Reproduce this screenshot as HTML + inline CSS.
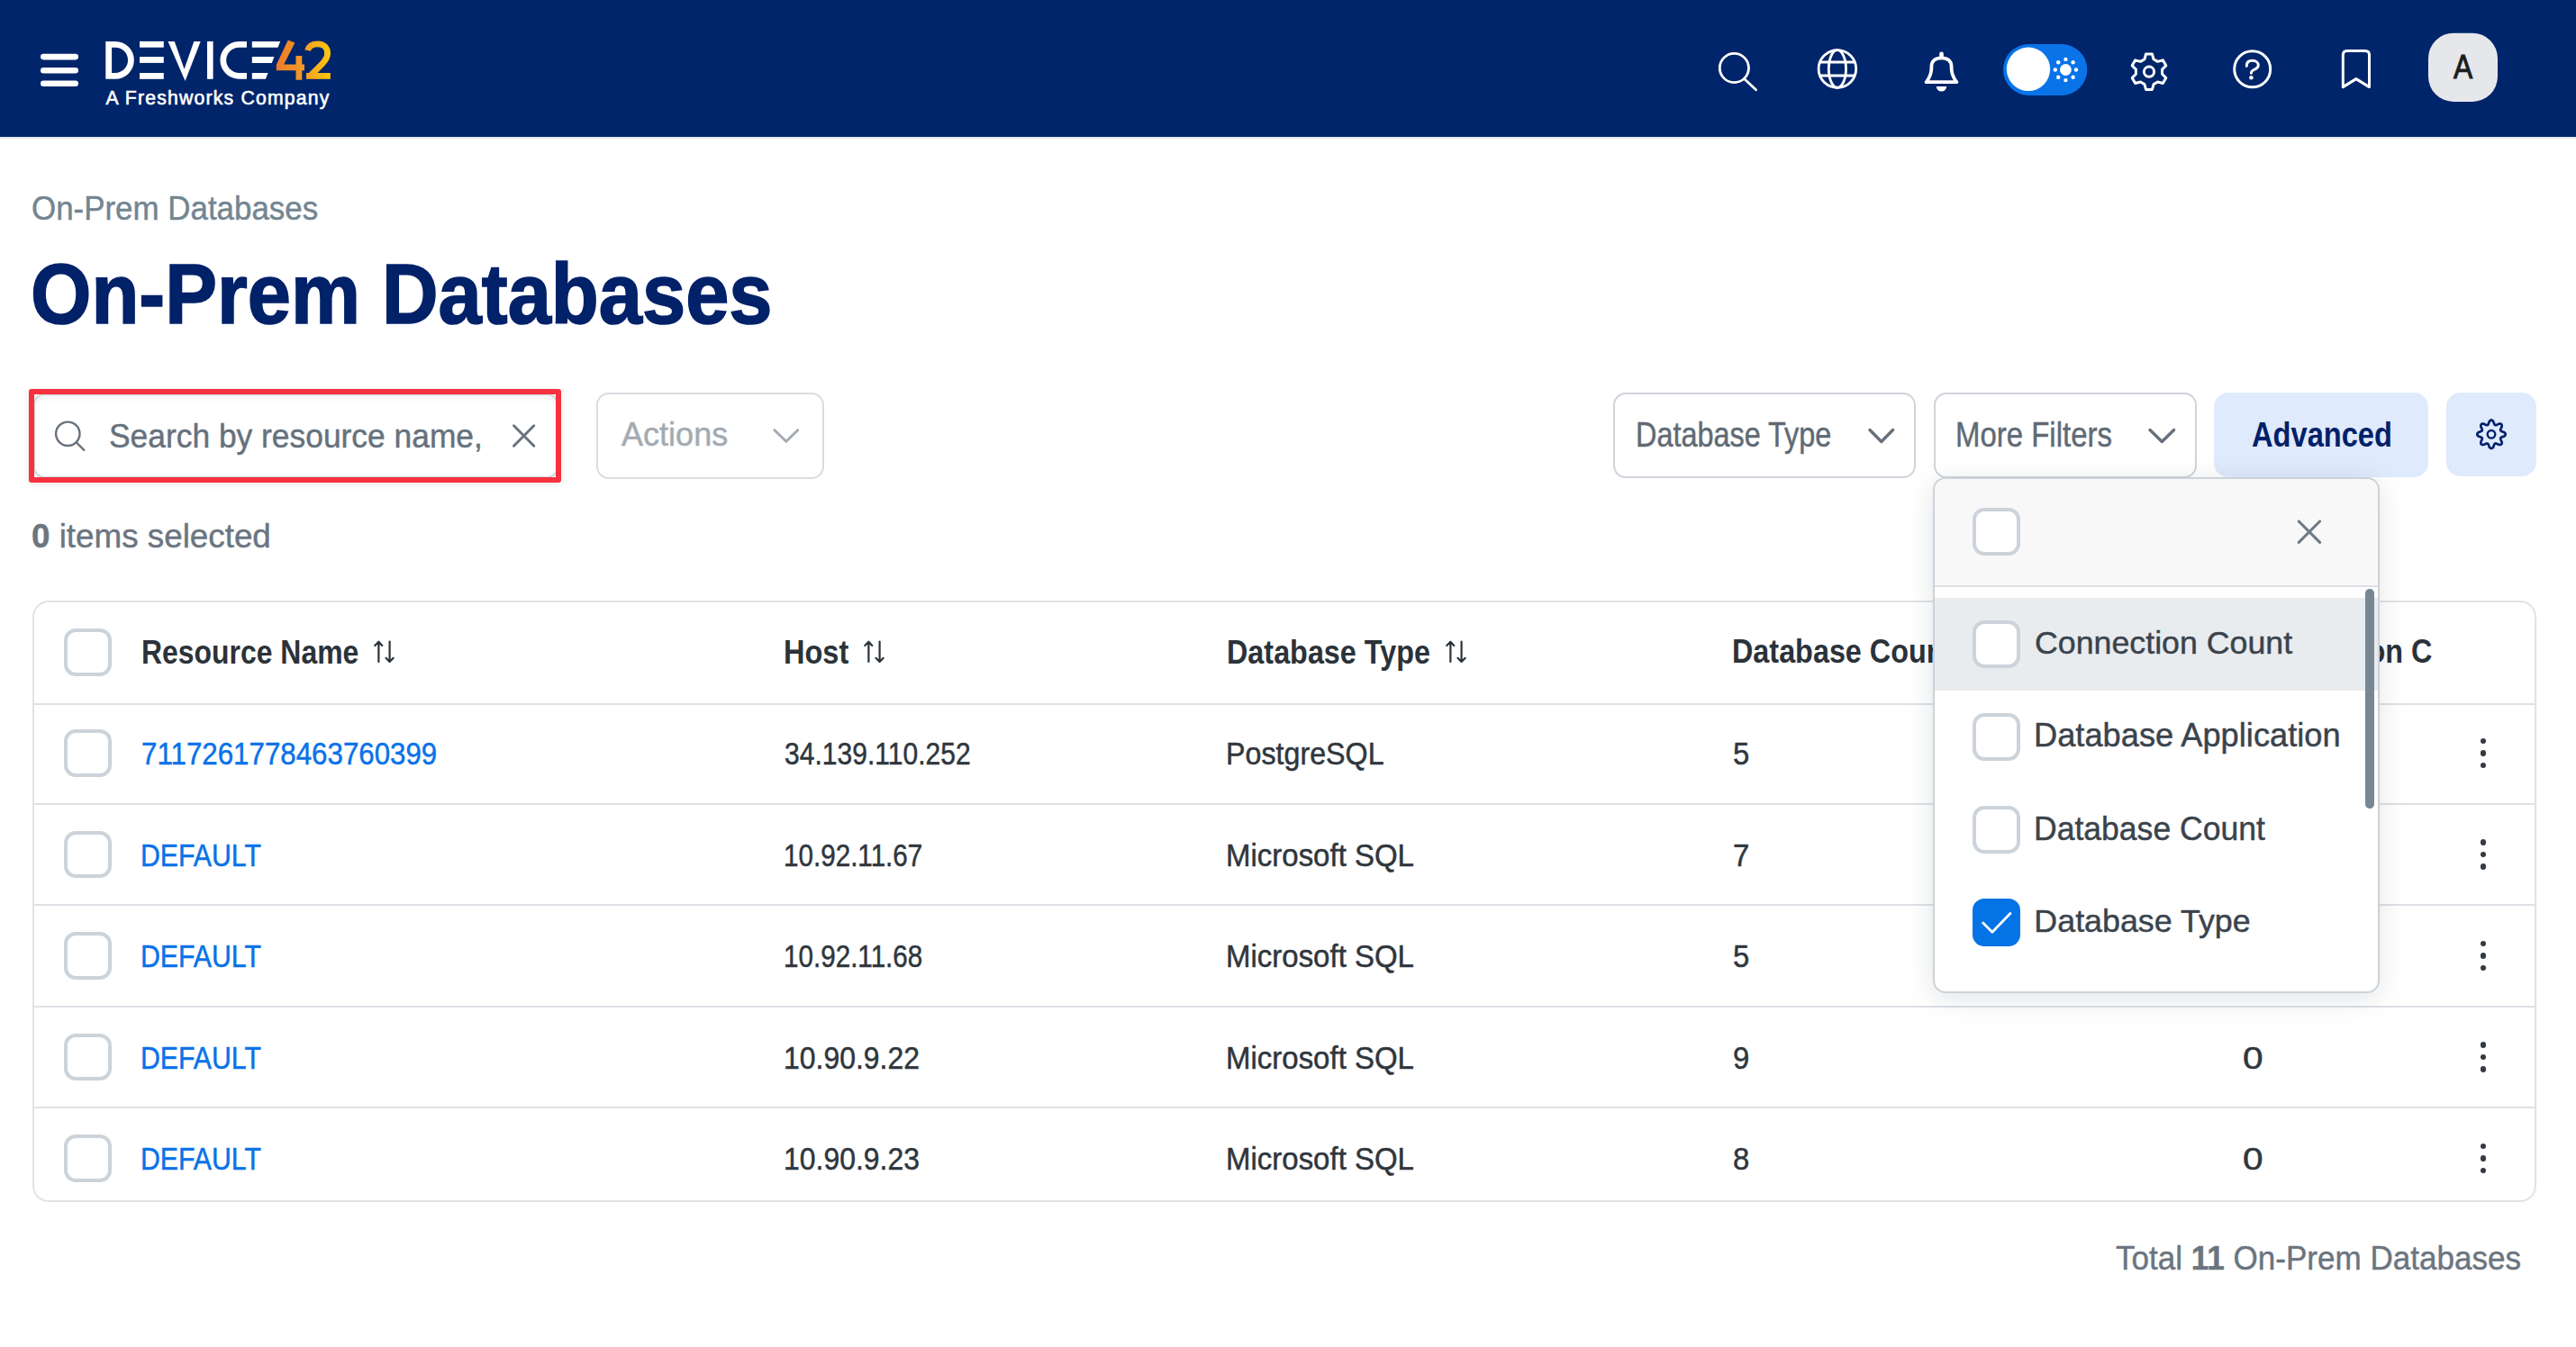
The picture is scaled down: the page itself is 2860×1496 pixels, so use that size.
<!DOCTYPE html>
<html><head><meta charset="utf-8">
<style>
html,body{margin:0;padding:0;}
body{width:2860px;height:1496px;overflow:hidden;background:#fff;position:relative;font-family:"Liberation Sans",sans-serif;}
.ab{position:absolute;}
.t{position:absolute;white-space:pre;font-family:"Liberation Sans",sans-serif;}
.t b{font-weight:700;}
.cb{position:absolute;width:52.5px;height:52.5px;box-sizing:border-box;border:4px solid #cdd3da;border-radius:13px;background:#fff;z-index:12;}
.cb.on{background:#0473e6;border-color:#0473e6;}
.cb.on svg{position:absolute;left:-4px;top:-4px;}
.hl{position:absolute;left:38px;width:2776px;height:2px;background:#dde1e6;}
.dot{position:absolute;width:6.6px;height:6.6px;border-radius:50%;background:#333a42;}
@media (max-width:2000px){html{zoom:0.5;}}
.btn{position:absolute;box-sizing:border-box;border:2px solid #d3d8dd;border-radius:14px;background:#fff;}
</style></head>
<body>
<!-- header -->
<div class="ab" style="left:0;top:0;width:2860px;height:152px;background:#00256a;"></div>
<div class="ab" style="left:0;top:152px;width:2860px;height:2px;background:#e3e6ea;"></div>
<svg class="ab" style="left:0;top:0;z-index:2" width="2860" height="152" viewBox="0 0 2860 152">
 <defs>
  <linearGradient id="g42" gradientUnits="userSpaceOnUse" x1="306" y1="0" x2="367" y2="0">
   <stop offset="0" stop-color="#ee7a2c"/><stop offset="0.5" stop-color="#f39a24"/><stop offset="1" stop-color="#fdc90f"/>
  </linearGradient>
 </defs>
 <!-- hamburger -->
 <rect x="45" y="59.8" width="42" height="6.6" rx="3.3" fill="#fff"/>
 <rect x="45" y="75" width="42" height="6.6" rx="3.3" fill="#fff"/>
 <rect x="45" y="89.4" width="42" height="6.6" rx="3.3" fill="#fff"/>
 <!-- logo -->
 <path d="M120.7,49.3 H128 A17.4,17.55 0 0 1 128,84.4 H120.7 Z" fill="none" stroke="#fff" stroke-width="6.8"/>
 <rect x="155" y="45.9" width="26.8" height="6.8" fill="#fff"/>
 <rect x="155" y="63.1" width="26.8" height="6.8" fill="#fff"/>
 <rect x="155" y="81" width="26.8" height="6.8" fill="#fff"/>
 <path d="M186.5,45.9 L193.8,45.9 L204.6,76.8 L215.3,45.9 L222.7,45.9 L205.6,89.9 Z" fill="#fff"/>
 <rect x="230" y="45.9" width="6.6" height="41.9" fill="#fff"/>
 <path d="M274,49.3 H265.8 A18,17.55 0 0 0 265.8,84.4 H274" fill="none" stroke="#fff" stroke-width="6.8"/>
 <path d="M279.8,45.9 L311.2,45.9 L308.5,52.7 L279.8,52.7 Z" fill="#fff"/>
 <path d="M279.8,63.1 L304.5,63.1 L301.8,69.9 L279.8,69.9 Z" fill="#fff"/>
 <path d="M279.8,81 L297.6,81 L294.9,87.8 L279.8,87.8 Z" fill="#fff"/>
 <path d="M319.8,44.5 L327.4,47.5 L315.2,71.5 L328.5,71.5 L328.5,62 L335.3,62 L335.3,71.5 L338,71.5 L338,78.3 L335.3,78.3 L335.3,88.8 L328.5,88.8 L328.5,78.3 L306.8,78.3 L306.8,72 Z" fill="url(#g42)"/>
 <path d="M341.6,56 C342.8,50.5 347.5,48.8 353,48.8 C359.5,48.8 363.6,53 363.6,59.2 C363.6,64.5 360.8,67.8 356.8,71.8 L345.5,83.2" fill="none" stroke="url(#g42)" stroke-width="6.8"/>
 <rect x="340" y="81" width="26.8" height="6.8" fill="url(#g42)"/>
 <!-- search -->
 <circle cx="1925.4" cy="75.5" r="16.1" fill="none" stroke="#fff" stroke-width="2.8"/>
 <path d="M1937.3,88.2 L1949.6,99.8" stroke="#fff" stroke-width="2.8" stroke-linecap="round"/>
 <!-- globe -->
 <circle cx="2039.9" cy="76.5" r="20.8" fill="none" stroke="#fff" stroke-width="2.8"/>
 <ellipse cx="2039.9" cy="76.5" rx="9.6" ry="20.8" fill="none" stroke="#fff" stroke-width="2.8"/>
 <path d="M2020.5,69 H2059.3 M2020.5,84 H2059.3" stroke="#fff" stroke-width="2.8"/>
 <!-- bell -->
 <path d="M2138.6,91.2 L2172.4,91.2 C2169.8,87.8 2166.8,84 2166.6,76 L2166.6,74 C2166.6,67.5 2162,64.3 2155.5,64.3 C2149,64.3 2144.4,67.5 2144.4,74 L2144.4,76 C2144.2,84 2141.2,87.8 2138.6,91.2 Z" fill="none" stroke="#fff" stroke-width="3.8" stroke-linejoin="round"/>
 <path d="M2155.5,59.8 V63" stroke="#fff" stroke-width="4.6" stroke-linecap="round"/>
 <path d="M2149.8,96 A5.7,5.6 0 0 0 2161.2,96 Z" fill="#fff"/>
 <!-- toggle -->
 <rect x="2224" y="49" width="93.3" height="56.9" rx="28.45" fill="#0a73e8"/>
 <circle cx="2252" cy="76.8" r="24.2" fill="#fff"/>
 <circle cx="2293.4" cy="77.5" r="6.4" fill="#fff"/>
 <g fill="#fff">
  <circle cx="2293.4" cy="65.9" r="2.2"/><circle cx="2293.4" cy="89.1" r="2.2"/>
  <circle cx="2281.8" cy="77.5" r="2.2"/><circle cx="2305" cy="77.5" r="2.2"/>
  <circle cx="2285.2" cy="69.3" r="2.2"/><circle cx="2301.6" cy="69.3" r="2.2"/>
  <circle cx="2285.2" cy="85.7" r="2.2"/><circle cx="2301.6" cy="85.7" r="2.2"/>
 </g>
 <!-- gear -->
 <path d="M2380.94,65.79 L2382.53,60.00 L2389.47,60.00 L2391.06,65.79 L2395.51,68.36 L2401.32,66.84 L2404.79,72.86 L2400.58,77.13 L2400.58,82.27 L2404.79,86.54 L2401.32,92.56 L2395.51,91.04 L2391.06,93.61 L2389.47,99.40 L2382.53,99.40 L2380.94,93.61 L2376.49,91.04 L2370.68,92.56 L2367.21,86.54 L2371.42,82.27 L2371.42,77.13 L2367.21,72.86 L2370.68,66.84 L2376.49,68.36 Z" fill="none" stroke="#fff" stroke-width="3" stroke-linejoin="round"/>
 <circle cx="2386" cy="79.7" r="5.6" fill="none" stroke="#fff" stroke-width="3"/>
 <!-- help -->
 <circle cx="2500.7" cy="76.8" r="20" fill="none" stroke="#fff" stroke-width="3"/>
 <path d="M2494.3,73.2 C2494.3,69.3 2497,67.3 2500.8,67.3 C2504.6,67.3 2507.3,69.6 2507.3,72.4 C2507.3,75.2 2504.9,76.3 2502.4,77.5 C2500.3,78.5 2499.4,79.5 2499.4,81.2" fill="none" stroke="#fff" stroke-width="3" stroke-linecap="round"/>
 <circle cx="2499.4" cy="86.2" r="2.3" fill="#fff"/>
 <!-- bookmark -->
 <path d="M2601.3,96.6 V61 Q2601.3,56.5 2605.8,56.5 H2626 Q2630.5,56.5 2630.5,61 V96.6 L2615.9,87.6 Z" fill="none" stroke="#fff" stroke-width="3" stroke-linejoin="round"/>
 <!-- avatar -->
 <rect x="2696" y="36.7" width="77" height="76.3" rx="28" fill="#e5e7eb"/>
</svg>
<div class="t" style="left:2696px;width:77px;text-align:center;top:55.6px;font-size:37px;line-height:37px;color:#1c1c1c;z-index:3;-webkit-text-stroke:0.9px #1c1c1c;transform:scale(0.86,1.0);transform-origin:50% 31.45px">A</div>

<div class="t" style="left:117.6px;top:98.1px;font-size:21.2px;line-height:21.2px;letter-spacing:1.2px;color:#fff;-webkit-text-stroke:0.6px #fff;z-index:3">A Freshworks Company</div>
<!-- search box -->
<div class="ab" style="left:37px;top:437px;width:583px;height:94px;box-sizing:border-box;border:2px solid #cfd6dc;border-radius:12px;background:#fff;box-shadow:inset 0 3px 6px rgba(0,0,0,0.06)"></div>
<div class="ab" style="left:32px;top:432.2px;width:590.5px;height:104.2px;box-sizing:border-box;border:6px solid #f8303f;border-radius:3px;box-shadow:0 2px 8px rgba(0,0,0,0.10)"></div>
<svg class="ab" style="left:0;top:420px" width="940" height="120" viewBox="0 420 940 120">
 <circle cx="75.3" cy="481.8" r="13.2" fill="none" stroke="#68737d" stroke-width="2.4"/>
 <path d="M84.8,491.3 L93.3,499.8" stroke="#68737d" stroke-width="2.4" stroke-linecap="round"/>
 <path d="M570.5,472.8 L592.8,495.2 M592.8,472.8 L570.5,495.2" stroke="#68737d" stroke-width="3" stroke-linecap="round"/>
</svg>
<!-- actions -->
<div class="btn" style="left:662px;top:436.4px;width:252.6px;height:95.4px;border-color:#d9dde2"></div>
<svg class="ab" style="left:0;top:420px;z-index:2" width="940" height="120" viewBox="0 420 940 120">
 <path d="M859.9,477.7 L872.8,490.3 L885.7,477.7" fill="none" stroke="#a3aab2" stroke-width="3" stroke-linecap="round" stroke-linejoin="round"/>
</svg>
<!-- right toolbar -->
<div class="btn" style="left:1791px;top:436px;width:336px;height:95px;border-color:#cfd4da"></div>
<div class="btn" style="left:2146.5px;top:436px;width:292px;height:95px;border-color:#cfd4da"></div>
<div class="ab" style="left:2457.5px;top:436px;width:238.5px;height:94px;border-radius:16px;background:#dfeafd"></div>
<div class="ab" style="left:2716px;top:436px;width:100px;height:93px;border-radius:16px;background:#dfeafd"></div>
<svg class="ab" style="left:1700px;top:420px;z-index:2" width="1160" height="120" viewBox="1700 420 1160 120">
 <path d="M2076,477.5 L2088.8,490.5 L2101.6,477.5" fill="none" stroke="#67717c" stroke-width="3.4" stroke-linecap="round" stroke-linejoin="round"/>
 <path d="M2387,477.5 L2400.3,490.5 L2413.6,477.5" fill="none" stroke="#67717c" stroke-width="3.4" stroke-linecap="round" stroke-linejoin="round"/>
 <path d="M2766.00,466.60 L2766.61,466.70 L2767.20,467.01 L2767.75,467.50 L2768.24,468.18 L2768.61,469.16 L2768.92,470.14 L2769.23,470.85 L2769.54,471.40 L2769.87,471.80 L2770.25,472.04 L2770.69,472.14 L2771.20,472.09 L2771.81,471.92 L2772.53,471.64 L2773.44,471.16 L2774.40,470.73 L2775.23,470.60 L2775.96,470.63 L2776.60,470.84 L2777.10,471.20 L2777.46,471.70 L2777.67,472.34 L2777.70,473.07 L2777.57,473.90 L2777.14,474.86 L2776.66,475.77 L2776.38,476.49 L2776.21,477.10 L2776.16,477.61 L2776.26,478.05 L2776.50,478.43 L2776.90,478.76 L2777.45,479.07 L2778.16,479.38 L2779.14,479.69 L2780.12,480.06 L2780.80,480.55 L2781.29,481.10 L2781.60,481.69 L2781.70,482.30 L2781.60,482.91 L2781.29,483.50 L2780.80,484.05 L2780.12,484.54 L2779.14,484.91 L2778.16,485.22 L2777.45,485.53 L2776.90,485.84 L2776.50,486.17 L2776.26,486.55 L2776.16,486.99 L2776.21,487.50 L2776.38,488.11 L2776.66,488.83 L2777.14,489.74 L2777.57,490.70 L2777.70,491.53 L2777.67,492.26 L2777.46,492.90 L2777.10,493.40 L2776.60,493.76 L2775.96,493.97 L2775.23,494.00 L2774.40,493.87 L2773.44,493.44 L2772.53,492.96 L2771.81,492.68 L2771.20,492.51 L2770.69,492.46 L2770.25,492.56 L2769.87,492.80 L2769.54,493.20 L2769.23,493.75 L2768.92,494.46 L2768.61,495.44 L2768.24,496.42 L2767.75,497.10 L2767.20,497.59 L2766.61,497.90 L2766.00,498.00 L2765.39,497.90 L2764.80,497.59 L2764.25,497.10 L2763.76,496.42 L2763.39,495.44 L2763.08,494.46 L2762.77,493.75 L2762.46,493.20 L2762.13,492.80 L2761.75,492.56 L2761.31,492.46 L2760.80,492.51 L2760.19,492.68 L2759.47,492.96 L2758.56,493.44 L2757.60,493.87 L2756.77,494.00 L2756.04,493.97 L2755.40,493.76 L2754.90,493.40 L2754.54,492.90 L2754.33,492.26 L2754.30,491.53 L2754.43,490.70 L2754.86,489.74 L2755.34,488.83 L2755.62,488.11 L2755.79,487.50 L2755.84,486.99 L2755.74,486.55 L2755.50,486.17 L2755.10,485.84 L2754.55,485.53 L2753.84,485.22 L2752.86,484.91 L2751.88,484.54 L2751.20,484.05 L2750.71,483.50 L2750.40,482.91 L2750.30,482.30 L2750.40,481.69 L2750.71,481.10 L2751.20,480.55 L2751.88,480.06 L2752.86,479.69 L2753.84,479.38 L2754.55,479.07 L2755.10,478.76 L2755.50,478.43 L2755.74,478.05 L2755.84,477.61 L2755.79,477.10 L2755.62,476.49 L2755.34,475.77 L2754.86,474.86 L2754.43,473.90 L2754.30,473.07 L2754.33,472.34 L2754.54,471.70 L2754.90,471.20 L2755.40,470.84 L2756.04,470.63 L2756.77,470.60 L2757.60,470.73 L2758.56,471.16 L2759.47,471.64 L2760.19,471.92 L2760.80,472.09 L2761.31,472.14 L2761.75,472.04 L2762.13,471.80 L2762.46,471.40 L2762.77,470.85 L2763.08,470.14 L2763.39,469.16 L2763.76,468.18 L2764.25,467.50 L2764.80,467.01 L2765.39,466.70 Z" fill="none" stroke="#012169" stroke-width="2.7" stroke-linejoin="round"/>
 <circle cx="2766" cy="482.3" r="4.3" fill="none" stroke="#012169" stroke-width="2.4"/>
</svg>

<!-- table -->
<div class="ab" style="left:36px;top:667px;width:2780px;height:668px;box-sizing:border-box;border:2px solid #e0e3e7;border-radius:18px;background:#fff"></div>
<div class="hl" style="top:781px"></div>
<div class="hl" style="top:892px"></div>
<div class="hl" style="top:1004px"></div>
<div class="hl" style="top:1116.5px"></div>
<div class="hl" style="top:1229px"></div>
<svg class="ab" style="left:412.5px;top:711px" width="26" height="27" viewBox="0 0 26 27"><path d="M7.4,23.9 V1.8 M3.3,5.9 L7.4,1.7 L11.3,6 M19.6,1.6 V23.8 M15.5,19.8 L19.6,24 L23.7,19.8" fill="none" stroke="#2b3239" stroke-width="2.2" stroke-linecap="round" stroke-linejoin="round"/></svg><svg class="ab" style="left:957px;top:711px" width="26" height="27" viewBox="0 0 26 27"><path d="M7.4,23.9 V1.8 M3.3,5.9 L7.4,1.7 L11.3,6 M19.6,1.6 V23.8 M15.5,19.8 L19.6,24 L23.7,19.8" fill="none" stroke="#2b3239" stroke-width="2.2" stroke-linecap="round" stroke-linejoin="round"/></svg><svg class="ab" style="left:1602.5px;top:711px" width="26" height="27" viewBox="0 0 26 27"><path d="M7.4,23.9 V1.8 M3.3,5.9 L7.4,1.7 L11.3,6 M19.6,1.6 V23.8 M15.5,19.8 L19.6,24 L23.7,19.8" fill="none" stroke="#2b3239" stroke-width="2.2" stroke-linecap="round" stroke-linejoin="round"/></svg>
<div class="dot" style="left:2753.5px;top:819.8px"></div><div class="dot" style="left:2753.5px;top:833.2px"></div><div class="dot" style="left:2753.5px;top:846.6px"></div>
<div class="dot" style="left:2753.5px;top:932.3px"></div><div class="dot" style="left:2753.5px;top:945.7px"></div><div class="dot" style="left:2753.5px;top:959.1px"></div>
<div class="dot" style="left:2753.5px;top:1044.8px"></div><div class="dot" style="left:2753.5px;top:1058.2px"></div><div class="dot" style="left:2753.5px;top:1071.6px"></div>
<div class="dot" style="left:2753.5px;top:1157.3px"></div><div class="dot" style="left:2753.5px;top:1170.7px"></div><div class="dot" style="left:2753.5px;top:1184.1px"></div>
<div class="dot" style="left:2753.5px;top:1269.8px"></div><div class="dot" style="left:2753.5px;top:1283.2px"></div><div class="dot" style="left:2753.5px;top:1296.6px"></div>

<!-- dropdown -->
<div class="ab" style="left:2146px;top:530px;width:495.6px;height:573px;box-sizing:border-box;border:2px solid #cdd2d9;border-radius:14px;background:#fff;box-shadow:0 6px 30px rgba(20,30,50,0.12);z-index:10;overflow:hidden">
 <div class="ab" style="left:0;top:0;width:100%;height:118px;background:#f8f8f9"></div>
 <div class="ab" style="left:0;top:118px;width:100%;height:2px;background:#dde1e5"></div>
 <div class="ab" style="left:0;top:132px;width:100%;height:103px;background:#e9ecef"></div>
 <div class="ab" style="left:478.2px;top:121.8px;width:9.4px;height:244px;border-radius:4.7px;background:#778893"></div>
</div>
<svg class="ab" style="left:2500px;top:560px;z-index:12" width="100" height="60" viewBox="2500 560 100 60">
 <path d="M2552.2,579 L2575.6,602.4 M2575.6,579 L2552.2,602.4" stroke="#6f7a84" stroke-width="3.1" stroke-linecap="round"/>
</svg>
<div class="cb" style="left:2190.2px;top:564px"></div>
<div class="cb" style="left:2190.2px;top:689px"></div>
<div class="cb" style="left:2190.2px;top:792.4px"></div>
<div class="cb" style="left:2190.2px;top:895.3px"></div>
<div class="cb on" style="left:2190px;top:998px"><svg width="53" height="53" viewBox="0 0 53 53"><path d="M11.7,27 L21.9,37.3 L41.9,16.5" fill="none" stroke="#fff" stroke-width="2.8" stroke-linecap="round" stroke-linejoin="round"/></svg></div>

<div class="cb" style="left:71px;top:698px"></div>
<div class="cb" style="left:71px;top:810.2px"></div>
<div class="cb" style="left:71px;top:922.7px"></div>
<div class="cb" style="left:71px;top:1035.2px"></div>
<div class="cb" style="left:71px;top:1147.7px"></div>
<div class="cb" style="left:71px;top:1260.2px"></div>
<div class="t" style="left:34.95px;top:213.99px;font-size:36.01px;line-height:36.01px;font-weight:400;color:#738591;transform:scale(0.9697,1.0303);transform-origin:0 30.61px;-webkit-text-stroke:0.45px #738591;">On-Prem Databases</div>
<div class="t" style="left:34.23px;top:282.90px;font-size:90.94px;line-height:90.94px;font-weight:700;color:#012169;transform:scale(0.9529,1.0471);transform-origin:0 77.30px;-webkit-text-stroke:1.6px #012169;">On-Prem Databases</div>
<div class="t" style="left:121.23px;top:466.80px;font-size:36.24px;line-height:36.24px;font-weight:400;color:#66717c;transform:scale(0.9762,1.0238);transform-origin:0 30.80px;-webkit-text-stroke:0.45px #66717c;">Search by resource name,</div>
<div class="t" style="left:690.00px;top:464.87px;font-size:36.50px;line-height:36.50px;font-weight:400;color:#a3aab2;transform:scale(0.9876,1.0124);transform-origin:0 31.03px;-webkit-text-stroke:0.45px #a3aab2;">Actions</div>
<div class="t" style="left:1816.11px;top:467.24px;font-size:35.48px;line-height:35.48px;font-weight:400;color:#5f6a75;transform:scale(0.9135,1.0865);transform-origin:0 30.16px;-webkit-text-stroke:0.45px #5f6a75;">Database Type</div>
<div class="t" style="left:2171.36px;top:467.01px;font-size:35.75px;line-height:35.75px;font-weight:400;color:#5f6a75;transform:scale(0.9216,1.0784);transform-origin:0 30.39px;-webkit-text-stroke:0.45px #5f6a75;">More Filters</div>
<div class="t" style="left:2499.72px;top:466.20px;font-size:35.30px;line-height:35.30px;font-weight:700;color:#012169;transform:scale(0.9243,1.0757);transform-origin:0 30.00px;">Advanced</div>
<div class="t" style="left:35.03px;top:578.19px;font-size:36.95px;line-height:36.95px;font-weight:400;color:#6b7580;transform:scale(0.9959,1.0041);transform-origin:0 31.41px;-webkit-text-stroke:0.45px #6b7580;"><b>0</b> items selected</div>
<div class="t" style="left:156.56px;top:707.97px;font-size:34.15px;line-height:34.15px;font-weight:700;color:#2b3239;transform:scale(0.9349,1.0651);transform-origin:0 29.03px;">Resource Name</div>
<div class="t" style="left:869.62px;top:707.72px;font-size:34.45px;line-height:34.45px;font-weight:700;color:#2b3239;transform:scale(0.9441,1.0559);transform-origin:0 29.28px;">Host</div>
<div class="t" style="left:1361.64px;top:707.79px;font-size:34.37px;line-height:34.37px;font-weight:700;color:#2b3239;transform:scale(0.9415,1.0585);transform-origin:0 29.21px;">Database Type</div>
<div class="t" style="left:1923.14px;top:706.08px;font-size:36.38px;line-height:36.38px;font-weight:700;color:#2b3239;transform:scale(0.8894,1.0000);transform-origin:0 30.92px;">Database Count</div>
<div class="t" style="left:2489.67px;top:706.08px;font-size:36.38px;line-height:36.38px;font-weight:700;color:#2b3239;transform:scale(0.8894,1.0000);transform-origin:0 30.92px;">Connection C</div>
<div class="t" style="left:2259.41px;top:696.82px;font-size:35.63px;line-height:35.63px;font-weight:400;color:#3a434c;transform:scale(1.0034,0.9966);transform-origin:0 30.28px;z-index:12;-webkit-text-stroke:0.45px #3a434c;">Connection Count</div>
<div class="t" style="left:2258.30px;top:799.34px;font-size:36.54px;line-height:36.54px;font-weight:400;color:#3a434c;transform:scale(0.9924,1.0076);transform-origin:0 31.06px;z-index:12;-webkit-text-stroke:0.45px #3a434c;">Database Application</div>
<div class="t" style="left:2258.36px;top:903.44px;font-size:36.19px;line-height:36.19px;font-weight:400;color:#3a434c;transform:scale(0.9827,1.0173);transform-origin:0 30.76px;z-index:12;-webkit-text-stroke:0.45px #3a434c;">Database Count</div>
<div class="t" style="left:2258.33px;top:1006.23px;font-size:35.84px;line-height:35.84px;font-weight:400;color:#3a434c;z-index:12;-webkit-text-stroke:0.45px #3a434c;">Database Type</div>
<div class="t" style="left:2349.30px;top:1380.47px;font-size:36.15px;line-height:36.15px;font-weight:400;color:#6b7580;transform:scale(0.9697,1.0303);transform-origin:0 30.73px;-webkit-text-stroke:0.45px #6b7580;">Total <b>11</b> On-Prem Databases</div>
<div class="t" style="left:157.24px;top:819.04px;font-size:35.36px;line-height:35.36px;font-weight:400;color:#0a72e8;transform:scale(0.8848,1.0000);transform-origin:0 30.06px;-webkit-text-stroke:0.5px #0a72e8;">7117261778463760399</div>
<div class="t" style="left:871.10px;top:819.04px;font-size:35.36px;line-height:35.36px;font-weight:400;color:#2f363d;transform:scale(0.8500,1.0000);transform-origin:0 30.06px;-webkit-text-stroke:0.5px #2f363d;">34.139.110.252</div>
<div class="t" style="left:1361.32px;top:819.04px;font-size:35.36px;line-height:35.36px;font-weight:400;color:#2f363d;transform:scale(0.9115,1.0000);transform-origin:0 30.06px;-webkit-text-stroke:0.5px #2f363d;">PostgreSQL</div>
<div class="t" style="left:1924.08px;top:819.04px;font-size:35.36px;line-height:35.36px;font-weight:400;color:#2f363d;transform:scale(0.9308,1.0000);transform-origin:0 30.06px;-webkit-text-stroke:0.5px #2f363d;">5</div>
<div class="t" style="left:156.38px;top:931.54px;font-size:35.36px;line-height:35.36px;font-weight:400;color:#0a72e8;transform:scale(0.8556,1.0000);transform-origin:0 30.06px;-webkit-text-stroke:0.5px #0a72e8;">DEFAULT</div>
<div class="t" style="left:869.93px;top:931.54px;font-size:35.36px;line-height:35.36px;font-weight:400;color:#2f363d;transform:scale(0.8378,1.0000);transform-origin:0 30.06px;-webkit-text-stroke:0.5px #2f363d;">10.92.11.67</div>
<div class="t" style="left:1361.26px;top:931.54px;font-size:35.36px;line-height:35.36px;font-weight:400;color:#2f363d;transform:scale(0.9329,1.0000);transform-origin:0 30.06px;-webkit-text-stroke:0.5px #2f363d;">Microsoft SQL</div>
<div class="t" style="left:1923.75px;top:931.54px;font-size:35.36px;line-height:35.36px;font-weight:400;color:#2f363d;transform:scale(0.9308,1.0000);transform-origin:0 30.06px;-webkit-text-stroke:0.5px #2f363d;">7</div>
<div class="t" style="left:156.38px;top:1044.04px;font-size:35.36px;line-height:35.36px;font-weight:400;color:#0a72e8;transform:scale(0.8556,1.0000);transform-origin:0 30.06px;-webkit-text-stroke:0.5px #0a72e8;">DEFAULT</div>
<div class="t" style="left:869.93px;top:1044.04px;font-size:35.36px;line-height:35.36px;font-weight:400;color:#2f363d;transform:scale(0.8378,1.0000);transform-origin:0 30.06px;-webkit-text-stroke:0.5px #2f363d;">10.92.11.68</div>
<div class="t" style="left:1361.26px;top:1044.04px;font-size:35.36px;line-height:35.36px;font-weight:400;color:#2f363d;transform:scale(0.9329,1.0000);transform-origin:0 30.06px;-webkit-text-stroke:0.5px #2f363d;">Microsoft SQL</div>
<div class="t" style="left:1924.08px;top:1044.04px;font-size:35.36px;line-height:35.36px;font-weight:400;color:#2f363d;transform:scale(0.9308,1.0000);transform-origin:0 30.06px;-webkit-text-stroke:0.5px #2f363d;">5</div>
<div class="t" style="left:156.38px;top:1156.54px;font-size:35.36px;line-height:35.36px;font-weight:400;color:#0a72e8;transform:scale(0.8556,1.0000);transform-origin:0 30.06px;-webkit-text-stroke:0.5px #0a72e8;">DEFAULT</div>
<div class="t" style="left:869.74px;top:1156.54px;font-size:35.36px;line-height:35.36px;font-weight:400;color:#2f363d;transform:scale(0.9037,1.0000);transform-origin:0 30.06px;-webkit-text-stroke:0.5px #2f363d;">10.90.9.22</div>
<div class="t" style="left:1361.26px;top:1156.54px;font-size:35.36px;line-height:35.36px;font-weight:400;color:#2f363d;transform:scale(0.9329,1.0000);transform-origin:0 30.06px;-webkit-text-stroke:0.5px #2f363d;">Microsoft SQL</div>
<div class="t" style="left:1923.75px;top:1156.54px;font-size:35.36px;line-height:35.36px;font-weight:400;color:#2f363d;transform:scale(0.9308,1.0000);transform-origin:0 30.06px;-webkit-text-stroke:0.5px #2f363d;">9</div>
<div class="t" style="left:2489.88px;top:1156.54px;font-size:35.36px;line-height:35.36px;font-weight:400;color:#2f363d;transform:scale(1.1488,1.0000);transform-origin:0 30.06px;-webkit-text-stroke:0.5px #2f363d;">0</div>
<div class="t" style="left:156.38px;top:1269.04px;font-size:35.36px;line-height:35.36px;font-weight:400;color:#0a72e8;transform:scale(0.8556,1.0000);transform-origin:0 30.06px;-webkit-text-stroke:0.5px #0a72e8;">DEFAULT</div>
<div class="t" style="left:869.74px;top:1269.04px;font-size:35.36px;line-height:35.36px;font-weight:400;color:#2f363d;transform:scale(0.9037,1.0000);transform-origin:0 30.06px;-webkit-text-stroke:0.5px #2f363d;">10.90.9.23</div>
<div class="t" style="left:1361.26px;top:1269.04px;font-size:35.36px;line-height:35.36px;font-weight:400;color:#2f363d;transform:scale(0.9329,1.0000);transform-origin:0 30.06px;-webkit-text-stroke:0.5px #2f363d;">Microsoft SQL</div>
<div class="t" style="left:1924.08px;top:1269.04px;font-size:35.36px;line-height:35.36px;font-weight:400;color:#2f363d;transform:scale(0.9308,1.0000);transform-origin:0 30.06px;-webkit-text-stroke:0.5px #2f363d;">8</div>
<div class="t" style="left:2489.88px;top:1269.04px;font-size:35.36px;line-height:35.36px;font-weight:400;color:#2f363d;transform:scale(1.1488,1.0000);transform-origin:0 30.06px;-webkit-text-stroke:0.5px #2f363d;">0</div>
</body></html>
